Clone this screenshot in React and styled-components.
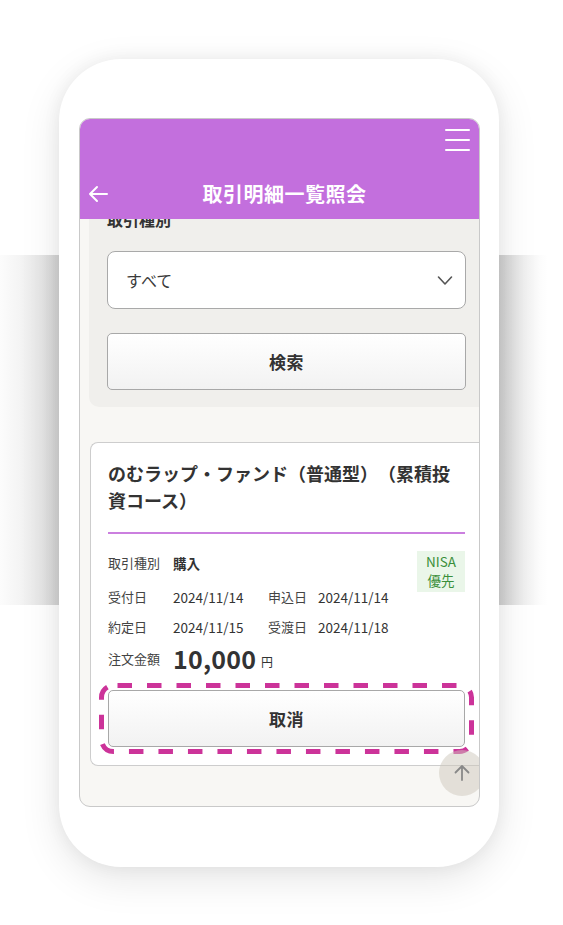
import React from "react";
import styled, { createGlobalStyle } from "styled-components";

const Global = createGlobalStyle`
  html, body { margin: 0; padding: 0; background: #fff; }
  body {
    font-family: "Noto Sans CJK JP", "Noto Sans", sans-serif;
    color: #333;
    text-spacing-trim: space-all;
  }
  * { box-sizing: border-box; }
`;

const Stage = styled.div`
  width: 563px;
  height: 925px;
  padding: 59px 0 0 59px;
  background-color: #fff;
  background-image: linear-gradient(
    to right,
    #fcfcfc 0px,
    #f4f4f4 20px,
    #e5e5e5 42px,
    #d4d4d4 59px,
    #d1d1d1 499px,
    #dfdfdf 511px,
    #f0f0f0 525px,
    #fcfcfc 540px,
    #ffffff 548px
  );
  background-repeat: no-repeat;
  background-position: 0 255px;
  background-size: 100% 350px;
  overflow: hidden;
`;

const Phone = styled.div`
  width: 440px;
  height: 808px;
  background: #fff;
  border-radius: 62px;
  padding: 59px 19px 0 20px;
  box-shadow: 0 12px 40px rgba(0, 0, 0, 0.1), 0 0 18px rgba(0, 0, 0, 0.06);
`;

const Screen = styled.div`
  position: relative;
  width: 401px;
  height: 689px;
  border: 1.5px solid #c9c9c9;
  border-radius: 11px;
  overflow: hidden;
  background: #f8f7f4;
  display: flex;
  flex-direction: column;
`;

const Header = styled.header`
  flex: none;
  height: 100px;
  background: #c36fdd;
  display: flex;
  flex-direction: column;
  position: relative;
  z-index: 2;
`;

const TopBar = styled.div`
  height: 48px;
  display: flex;
  justify-content: flex-end;
  padding: 10px 9px 0 0;
`;

const Burger = styled.div`
  width: 25px;
  display: flex;
  flex-direction: column;
  gap: 8px;
  span {
    display: block;
    height: 2px;
    background: #fff;
    border-radius: 1px;
  }
`;

const TitleBar = styled.div`
  flex: 1;
  display: grid;
  grid-template-columns: 50px 1fr 40px;
  align-items: center;
  padding-top: 2px;
`;

const BackBtn = styled.div`
  display: flex;
  align-items: center;
  padding-left: 7px;
`;

const Title = styled.h1`
  margin: 0;
  text-align: center;
  color: #fff;
  font-size: 20px;
  font-weight: 700;
  letter-spacing: 0.5px;
  line-height: 28px;
`;

const Content = styled.div`
  flex: 1;
  overflow: hidden;
  display: flex;
  flex-direction: column;
`;

const Panel = styled.section`
  margin: -12px 0 0 9px;
  background: #f0efec;
  border-radius: 0 0 0 10px;
  padding: 0 13px 17px 18px;
  display: flex;
  flex-direction: column;
`;

const Label = styled.div`
  font-size: 16px;
  font-weight: 700;
  line-height: 24px;
  color: #333;
  margin-bottom: 20px;
`;

const Select = styled.div`
  height: 58px;
  background: #fff;
  border: 1px solid #a9a9a9;
  border-radius: 8px;
  display: flex;
  align-items: center;
  justify-content: space-between;
  padding: 0 12px 0 18px;
  font-size: 16px;
  color: #3a3a3a;
`;

const Button = styled.div`
  position: relative;
  height: ${(p) => p.$h || 57}px;
  margin-top: ${(p) => p.$mt || 0}px;
  border: 1px solid #a8a8a8;
  border-radius: 5px;
  background: linear-gradient(#ffffff, #f2f2f2);
  display: flex;
  align-items: center;
  justify-content: center;
  font-size: 17px;
  font-weight: 700;
  color: #333;
  letter-spacing: 0.5px;
`;

const Card = styled.article`
  margin: 35px 0 0 10px;
  background: #fff;
  border: 1px solid #cdcdcd;
  border-right: none;
  border-radius: 8px 0 0 8px;
  padding: 17px 14px 18px 17px;
  display: flex;
  flex-direction: column;
`;

const CardTitle = styled.h2`
  margin: 0;
  font-size: 18px;
  font-weight: 700;
  line-height: 27px;
  color: #333;
`;

const Divider = styled.div`
  height: 1.5px;
  background: #cb7fdf;
  margin: 18px 0 14px;
`;

const Details = styled.div`
  display: flex;
  align-items: flex-start;
`;

const InfoCol = styled.div`
  flex: 1;
  display: flex;
  flex-direction: column;
`;

const Row = styled.div`
  display: flex;
  align-items: center;
  height: 30px;
  margin-bottom: ${(p) => p.$mb || 0}px;
  font-size: 13px;
  color: #333;
`;

const Key = styled.span`
  width: ${(p) => p.$w || 65}px;
  flex: none;
  color: #444;
`;

const Val = styled.span`
  width: ${(p) => p.$w || "auto"};
  flex: none;
  font-weight: ${(p) => (p.$bold ? 700 : 400)};
  font-size: 13.5px;
  color: #333;
`;

const Badge = styled.div`
  width: 48px;
  height: 41px;
  margin-top: 3px;
  background: #eaf6e9;
  color: #3a8f3a;
  font-size: 13.5px;
  line-height: 19px;
  display: flex;
  flex-direction: column;
  align-items: center;
  justify-content: center;
`;

const AmountRow = styled.div`
  display: flex;
  align-items: center;
  height: 33px;
  font-size: 13px;
  color: #444;
`;

const Amount = styled.span`
  font-size: 25px;
  font-weight: 700;
  color: #333;
  margin-right: 5px;
  letter-spacing: 0.2px;
  line-height: 33px;
`;

const Yen = styled.span`
  font-size: 12px;
  color: #333;
  margin-top: 7px;
`;

const DashFrame = styled.svg`
  position: absolute;
  left: -10px;
  top: -8px;
  width: 375px;
  height: 71px;
  pointer-events: none;
  overflow: visible;
`;

const ScrollTop = styled.div`
  position: absolute;
  right: -6px;
  bottom: 10px;
  width: 46px;
  height: 46px;
  border-radius: 50%;
  background: rgba(205, 200, 188, 0.5);
  display: flex;
  align-items: center;
  justify-content: center;
  z-index: 3;
`;

export default function App() {
  return (
    <>
      <Global />
      <Stage>
        <Phone>
          <Screen>
            <Header>
              <TopBar>
                <Burger>
                  <span />
                  <span />
                  <span />
                </Burger>
              </TopBar>
              <TitleBar>
                <BackBtn>
                  <svg width="22" height="18" viewBox="0 0 22 18" fill="none">
                    <path d="M20 9H3M10 2L3 9l7 7" stroke="#fff" strokeWidth="2" strokeLinecap="round" strokeLinejoin="round" />
                  </svg>
                </BackBtn>
                <Title>取引明細一覧照会</Title>
                <span />
              </TitleBar>
            </Header>
            <Content>
              <Panel>
                <Label>取引種別</Label>
                <Select>
                  <span>すべて</span>
                  <svg width="16" height="11" viewBox="0 0 16 11" fill="none">
                    <path d="M1.5 2l6.5 7 6.5-7" stroke="#555" strokeWidth="1.6" strokeLinecap="round" strokeLinejoin="round" />
                  </svg>
                </Select>
                <Button $mt={24} $h={57}>検索</Button>
              </Panel>
              <Card>
                <CardTitle>のむラップ・ファンド（普通型）（累積投資コース）</CardTitle>
                <Divider />
                <Details>
                  <InfoCol>
                    <Row $mb={4}>
                      <Key>取引種別</Key>
                      <Val $bold>購入</Val>
                    </Row>
                    <Row>
                      <Key>受付日</Key>
                      <Val $w="95px">2024/11/14</Val>
                      <Key $w={50}>申込日</Key>
                      <Val>2024/11/14</Val>
                    </Row>
                    <Row>
                      <Key>約定日</Key>
                      <Val $w="95px">2024/11/15</Val>
                      <Key $w={50}>受渡日</Key>
                      <Val>2024/11/18</Val>
                    </Row>
                  </InfoCol>
                  <Badge>
                    <span>NISA</span>
                    <span>優先</span>
                  </Badge>
                </Details>
                <AmountRow>
                  <Key>注文金額</Key>
                  <Amount>10,000</Amount>
                  <Yen>円</Yen>
                </AmountRow>
                <Button $mt={15} $h={57}>
                  取消
                  <DashFrame viewBox="0 0 375 71">
                    <rect
                      x="2.5"
                      y="2.5"
                      width="370"
                      height="66"
                      rx="12"
                      fill="none"
                      stroke="#cc3399"
                      strokeWidth="5"
                      strokeDasharray="14.5 15"
                      strokeDashoffset="-4"
                    />
                  </DashFrame>
                </Button>
              </Card>
            </Content>
            <ScrollTop>
              <svg width="18" height="18" viewBox="0 0 18 18" fill="none">
                <path d="M9 16V2M2.5 8.5L9 2l6.5 6.5" stroke="#888" strokeWidth="1.8" strokeLinecap="round" strokeLinejoin="round" />
              </svg>
            </ScrollTop>
          </Screen>
        </Phone>
      </Stage>
    </>
  );
}
